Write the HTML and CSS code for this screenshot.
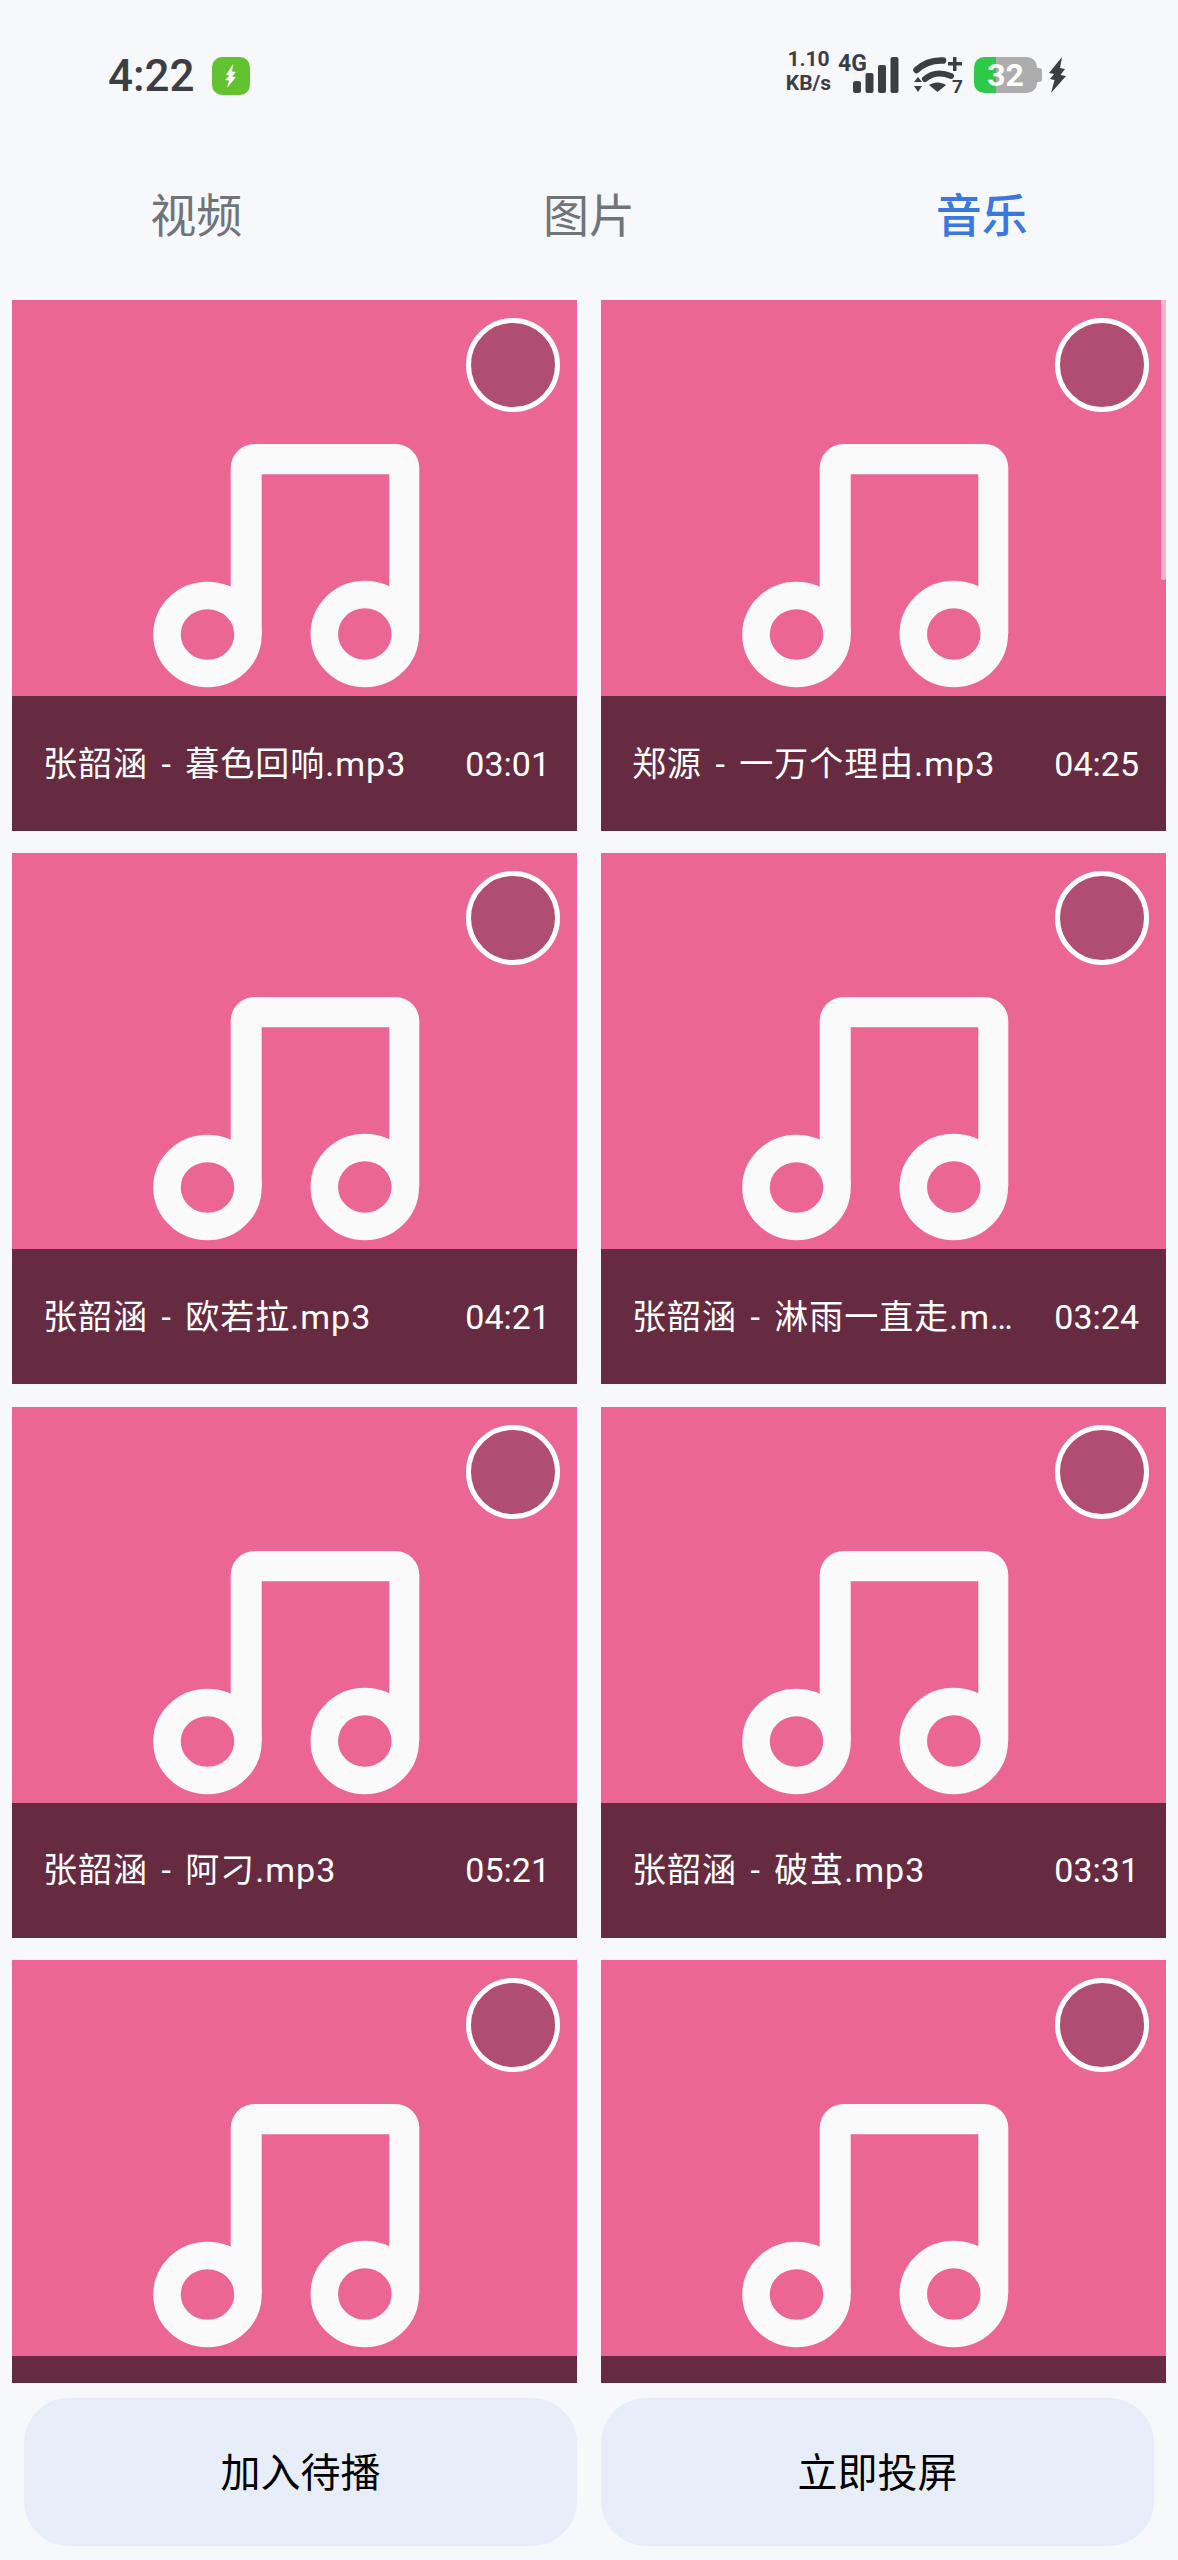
FILE: index.html
```html
<!doctype html>
<html>
<head>
<meta charset="utf-8">
<title>投屏</title>
	<link rel="stylesheet" href="styles.css">
</head>

<body>
	<svg class="defs" width="0" height="0">
		<symbol id="note" viewBox="0 0 565 396">
			<path fill="#fafafa" d="M218.7 300V168a24 24 0 0 1 24-24H383.300a24 24 0 0 1 24 24V334L377.300 300V174.300H249.700V334Z"/>
			<ellipse cx="195.500" cy="334.500" rx="40.500" ry="39" fill="none" stroke="#fafafa" stroke-width="27.500"/>
			<ellipse cx="352.800" cy="334" rx="40.500" ry="39.500" fill="none" stroke="#fafafa" stroke-width="27.500"/>
		</symbol>
	</svg>

	<div class="page">
		<div class="status">
			<div class="status-left">
				<span class="time">4:22</span>
				<span class="charge">
					<svg width="14" height="24" viewBox="0 0 14 24"><path fill="#fff" d="M9 0 2 11l3.500.5L1 16l4 .5L3 24l9-11-4-.5L12 8l-4-.5Z"/></svg>
				</span>
			</div>
			<div class="status-right">
				<div class="speed"><span>1.10</span><span>KB/s</span></div>
				<div class="net">4G</div>
				<svg class="signal" width="46" height="36" viewBox="0 0 46 36">
					<rect x="0" y="24" width="8" height="12" rx="2.500"/>
					<rect x="12.500" y="16" width="8" height="20" rx="2"/>
					<rect x="25" y="8" width="8" height="28" rx="2"/>
					<rect x="37.500" y="0" width="8" height="36" rx="2"/>
				</svg>
				<div class="wifi">
					<svg width="50" height="36" viewBox="0 0 50 36">
						<path class="arc" stroke-width="6.500" d="M3.500 13C11 6 20 3 30 3.500"/>
						<path class="arc" stroke-width="6" d="M12 22C19 16 28 15 38 19"/>
						<path d="M16 28C21 24.500 28 24.500 33 28L24.500 35Z"/>
						<path d="M1 25 5 20l4 5ZM1 29h8l-4 6Z"/>
						<path d="M35 5h5V0h3.500v5H49v3.500h-5.500V14H40V8.500h-5Z"/>
					</svg>
					<span class="wifi-num">7</span>
				</div>
				<div class="battery">
					<div class="battery-body"><span>32</span></div>
					<div class="battery-nub"></div>
				</div>
				<svg class="bolt" width="17" height="36" viewBox="0 0 17 36"><path d="M13 0 0 16l5 1-4 5 4.500 1L2 36 17 19l-5.500-1L16 12l-5-1Z"/></svg>
			</div>
		</div>

		<div class="tabs">
			<div class="tab">视频</div>
			<div class="tab">图片</div>
			<div class="tab on">音乐</div>
		</div>

		<div class="list">
			<div class="scrollbar"></div>
			<div class="card">
				<div class="art"><svg class="note"><use href="#note"/></svg><span class="pick"></span></div>
				<div class="caption"><span class="name">张韶涵 - 暮色回响.mp3</span><span class="len">03:01</span></div>
			</div>
			<div class="card">
				<div class="art"><svg class="note"><use href="#note"/></svg><span class="pick"></span></div>
				<div class="caption"><span class="name">郑源 - 一万个理由.mp3</span><span class="len">04:25</span></div>
			</div>
			<div class="card">
				<div class="art"><svg class="note"><use href="#note"/></svg><span class="pick"></span></div>
				<div class="caption"><span class="name">张韶涵 - 欧若拉.mp3</span><span class="len">04:21</span></div>
			</div>
			<div class="card">
				<div class="art"><svg class="note"><use href="#note"/></svg><span class="pick"></span></div>
				<div class="caption"><span class="name">张韶涵 - 淋雨一直走.mp3</span><span class="len">03:24</span></div>
			</div>
			<div class="card">
				<div class="art"><svg class="note"><use href="#note"/></svg><span class="pick"></span></div>
				<div class="caption"><span class="name">张韶涵 - 阿刁.mp3</span><span class="len">05:21</span></div>
			</div>
			<div class="card">
				<div class="art"><svg class="note"><use href="#note"/></svg><span class="pick"></span></div>
				<div class="caption"><span class="name">张韶涵 - 破茧.mp3</span><span class="len">03:31</span></div>
			</div>
			<div class="card">
				<div class="art"><svg class="note"><use href="#note"/></svg><span class="pick"></span></div>
				<div class="caption"></div>
			</div>
			<div class="card">
				<div class="art"><svg class="note"><use href="#note"/></svg><span class="pick"></span></div>
				<div class="caption"></div>
			</div>
		</div>

		<div class="actions">
			<div class="btn">加入待播</div>
			<div class="btn">立即投屏</div>
		</div>
	</div>
</body>
</html>
```

FILE: styles.css
```css
*{padding: 0;margin: 0;box-sizing: border-box;}
body{
	font-family: Roboto, "Noto Sans CJK SC", sans-serif;
	background-color: #f6f8fc;}

.defs{display: block;}

.page{
	width: 100%;
	height: 2560px;
	display: flex;
	flex-direction: column;
	overflow: hidden;}


.status{
	height: 130px;
	padding: 57px 112px 0 108px;
	display: flex;
	justify-content: space-between;
	align-items: flex-start;
	color: #3c3e44;}
.status-left{
	display: flex;
	align-items: center;
	height: 38px;
	gap: 17px;}
.time{
	font-size: 44px;
	font-weight: 500;
	line-height: 38px;}
.charge{
	width: 38px;
	height: 38px;
	border-radius: 10px;
	background-color: #63c22f;
	display: flex;
	align-items: center;
	justify-content: center;}

.status-right{
	display: flex;
	align-items: flex-end;
	height: 36px;
	position: relative;}
.speed{
	width: 47px;
	margin-right: 6px;
	display: flex;
	flex-direction: column;
	align-items: center;
	font-size: 21px;
	font-weight: 700;
	line-height: 24px;
	margin-bottom: -2px;}
.net{
	width: 29px;
	align-self: flex-start;
	font-size: 23px;
	font-weight: 700;
	line-height: 24px;
	margin-top: -5px;
	margin-right: -14px;}
.signal{fill: #3c3e44;margin-right: 14px;}
.wifi{
	width: 50px;
	height: 36px;
	position: relative;
	margin-right: 11px;}
.wifi svg{fill: #3c3e44;display: block;}
.wifi .arc{fill: none;stroke: #3c3e44;stroke-linecap: round;}
.wifi-num{
	position: absolute;
	right: 0;
	bottom: -2px;
	font-size: 19px;
	font-weight: 700;
	line-height: 17px;}
.battery{
	display: flex;
	align-items: center;
	margin-right: 7px;}
.battery-body{
	width: 63px;
	height: 36px;
	border-radius: 10px;
	background: linear-gradient(to right, #2fc94a 22px, #adadad 22px);
	display: flex;
	align-items: center;
	justify-content: center;
	color: #fff;
	font-size: 32px;
	font-weight: 700;}
.battery-nub{
	width: 5px;
	height: 14px;
	border-radius: 0 3px 3px 0;
	background-color: #adadad;}
.bolt{fill: #3c3e44;}


.tabs{
	height: 170px;
	padding-bottom: 6px;
	display: flex;
	align-items: center;}
.tab{
	flex: 1;
	text-align: center;
	font-size: 46px;
	color: #707377;}
.tab.on{color: #3a78e0;font-weight: 500;}


.list{
	height: 2083px;
	padding: 0 12px;
	display: grid;
	grid-template-columns: 565px 565px;
	grid-auto-rows: 531px;
	column-gap: 24px;
	row-gap: 22.300px;
	overflow: hidden;
	position: relative;}
.card{
	display: flex;
	flex-direction: column;}
.art{
	height: 396px;
	background-color: #ec6693;
	position: relative;}
.note{
	display: block;
	width: 100%;
	height: 100%;
	filter: blur(0.6px);}
.pick{
	position: absolute;
	top: 18px;
	right: 17px;
	width: 94px;
	height: 94px;
	border-radius: 50%;
	border: 5px solid #fff;
	background-color: #b04d72;}
.caption{
	flex: 1;
	padding: 0 27px 0 31px;
	background-color: #662b40;
	color: #fff;
	display: flex;
	align-items: center;
	gap: 32px;
	font-size: 34px;}
.name{
	flex: 1;
	min-width: 0;
	margin-top: -5px;
	letter-spacing: 1px;
	word-spacing: 4px;
	white-space: nowrap;
	overflow: hidden;
	text-overflow: ellipsis;}
.scrollbar{
	position: absolute;
	top: 0;
	right: 12px;
	width: 5px;
	height: 280px;
	border-radius: 0 0 3px 3px;
	background-color: rgba(255,255,255,.5);
	z-index: 1;}


.actions{
	padding: 15px 24px 0;
	display: flex;
	gap: 24px;}
.btn{
	flex: 1;
	height: 148px;
	padding-bottom: 5px;
	border-radius: 45px;
	background-color: #e7eef9;
	display: flex;
	align-items: center;
	justify-content: center;
	font-size: 40px;
	color: #000;}
```
